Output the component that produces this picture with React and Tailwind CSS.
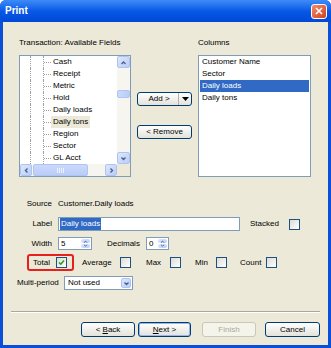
import React from "react";

const fields = ["Cash", "Receipt", "Metric", "Hold", "Daily loads", "Daily tons", "Region", "Sector", "GL Acct"];
const columns = ["Customer Name", "Sector", "Daily loads", "Daily tons"];

function Chevron({ dir = "down", size = 7 }) {
  const pts = {
    up: "1.5,5 3.5,3 5.5,5",
    down: "1.5,2.5 3.5,4.5 5.5,2.5",
    left: "4.5,1.5 2.5,3.5 4.5,5.5",
    right: "2.5,1.5 4.5,3.5 2.5,5.5",
  }[dir];
  return (
    <svg width={size} height={size} viewBox="0 0 7 7" className="shrink-0">
      <polyline points={pts} fill="none" stroke="#4d6185" strokeWidth="1.4" />
    </svg>
  );
}

function ScrollBtn({ dir, className = "", size = 7 }) {
  return (
    <div className={`flex items-center justify-center overflow-hidden rounded-[2px] border border-[#b0c4f2] bg-gradient-to-br from-[#dde7fd] to-[#b9cdf8] ${className}`}>
      <Chevron dir={dir} size={size} />
    </div>
  );
}

function Check({ checked }) {
  return (
    <div className="flex h-[11px] w-[11px] shrink-0 items-center justify-center border border-[#1c5180] bg-gradient-to-br from-[#dcdbd5] to-white">
      {checked && (
        <svg width="7" height="7" viewBox="0 0 7 7">
          <polyline points="1,3.5 2.8,5.2 6,1.5" fill="none" stroke="#21a121" strokeWidth="1.6" />
        </svg>
      )}
    </div>
  );
}

function Spinner({ value, w }) {
  return (
    <div className={`flex h-[13px] ${w} items-center border border-[#7f9db9] bg-white`}>
      <span className="flex-1 pl-[2px]">{value}</span>
      <div className="flex h-full w-[11px] flex-col p-px">
        <ScrollBtn dir="up" size={5} className="h-[5px] border-0" />
        <div className="h-px" />
        <ScrollBtn dir="down" size={5} className="h-[5px] border-0" />
      </div>
    </div>
  );
}

function Button({ children, w, ml = "", variant }) {
  const base = "flex h-[15px] items-center justify-center rounded-[3px] border";
  if (variant === "disabled")
    return <div className={`${base} ${w} ${ml} border-[#c9c7ba] bg-[#f5f4ea] text-[#aca899]`}>{children}</div>;
  if (variant === "default")
    return (
      <div className={`${base} ${w} ${ml} border-[#003c74] bg-gradient-to-b from-white to-[#e3e2da] ring-1 ring-inset ring-[#99b5ea]`}>
        {children}
      </div>
    );
  return <div className={`${base} ${w} ${ml} border-[#003c74] bg-gradient-to-b from-white to-[#e3e2da]`}>{children}</div>;
}

export default function App() {
  return (
    <div className="flex h-[348px] w-[331px] flex-col overflow-hidden rounded-t-[6px] bg-[#0a4fd8] font-['Liberation_Sans',Arial,sans-serif] text-[8px] leading-[12px] text-black">
      {/* Title bar */}
      <div className="flex h-[22px] shrink-0 items-center justify-between bg-gradient-to-b from-[#3d8bf7] via-[#0859e6] to-[#0048d6] pl-[5px] pr-[4px]">
        <span className="text-[10px] font-bold text-white">Print</span>
        <div className="flex h-[15px] w-[16px] items-center justify-center rounded-[3px] border border-white bg-gradient-to-br from-[#f08a6a] to-[#d2401a]">
          <svg width="8" height="8" viewBox="0 0 8 8">
            <path d="M1 1L7 7M7 1L1 7" stroke="white" strokeWidth="1.6" />
          </svg>
        </div>
      </div>

      {/* Body */}
      <div className="mx-[3px] mb-[3px] flex flex-1 flex-col bg-[#ece9d8]">
        <div className="mt-[14px] flex h-[13px] items-center">
          <span className="ml-[16px] w-[179px]">Transaction: Available Fields</span>
          <span>Columns</span>
        </div>

        <div className="mt-[6px] flex h-[122px]">
          {/* Tree */}
          <div className="ml-[16px] flex w-[112px] flex-col border border-[#7f9db9] bg-white">
            <div className="flex h-[108px]">
              <div className="flex flex-1 flex-col">
                {fields.map((f) => (
                  <div key={f} className="flex h-[12px] items-stretch">
                    <div className="w-[10px]" />
                    <div className="w-[13px] border-l border-dotted border-[#a0a0a0]" />
                    <div className="flex w-[8px] items-center border-l border-dotted border-[#a0a0a0]">
                      <div className="w-full border-t border-dotted border-[#a0a0a0]" />
                    </div>
                    <span className={`px-[2px] leading-[12px] ${f === "Daily tons" ? "bg-[#ece9d8]" : ""}`}>{f}</span>
                  </div>
                ))}
              </div>
              <div className="flex w-[13px] flex-col bg-[#f6f5ef]">
                <ScrollBtn dir="up" className="h-[12px]" />
                <div className="flex flex-1 flex-col">
                  <div className="h-[22px]" />
                  <div className="h-[8px] rounded-[2px] border border-[#b0c4f2] bg-gradient-to-r from-[#cbd9fc] to-[#b9cdf8]" />
                </div>
                <ScrollBtn dir="down" className="h-[12px]" />
              </div>
            </div>
            <div className="flex h-[12px]">
              <div className="flex w-[97px] bg-[#f6f5ef]">
                <ScrollBtn dir="left" className="w-[12px]" />
                <div className="ml-px flex w-[55px] items-center justify-center rounded-[2px] border border-[#b0c4f2] bg-gradient-to-b from-[#cbd9fc] to-[#b9cdf8]">
                  <div className="flex gap-px">
                    <div className="h-[5px] w-px bg-[#eef3fe]" />
                    <div className="h-[5px] w-px bg-[#eef3fe]" />
                    <div className="h-[5px] w-px bg-[#eef3fe]" />
                    <div className="h-[5px] w-px bg-[#eef3fe]" />
                  </div>
                </div>
                <div className="flex-1" />
                <ScrollBtn dir="right" className="w-[12px]" />
              </div>
              <div className="flex-1 bg-[#ece9d8]" />
            </div>
          </div>

          {/* Middle buttons */}
          <div className="flex w-[67px] flex-col px-[6px] pt-[37px]">
            <div className="flex h-[14px] items-stretch rounded-[3px] border border-[#003c74] bg-gradient-to-b from-white to-[#e3e2da]">
              <span className="flex flex-1 items-center justify-center pl-[2px]">Add &gt;</span>
              <div className="flex w-[13px] items-center justify-center border-l border-[#b5b2a3]">
                <svg width="7" height="4" viewBox="0 0 7 4">
                  <path d="M0 0H7L3.5 4Z" fill="black" />
                </svg>
              </div>
            </div>
            <div className="mt-[19px] flex h-[14px] items-center justify-center rounded-[3px] border border-[#003c74] bg-gradient-to-b from-white to-[#e3e2da]">
              &lt; Remove
            </div>
          </div>

          {/* Columns list */}
          <div className="flex w-[113px] flex-col border border-[#7f9db9] bg-white px-px">
            {columns.map((c) => (
              <div
                key={c}
                className={`h-[12px] pl-[2px] leading-[12px] ${c === "Daily loads" ? "bg-[#316ac5] text-white" : ""}`}
              >
                {c}
              </div>
            ))}
          </div>
        </div>

        {/* Source */}
        <div className="mt-[20px] flex h-[13px] items-center">
          <span className="w-[49px] text-right">Source</span>
          <span className="ml-[6px]">Customer.Daily loads</span>
        </div>

        {/* Label */}
        <div className="mt-[7px] flex h-[14px] items-center">
          <span className="w-[49px] text-right">Label</span>
          <div className="ml-[6px] flex h-[14px] w-[182px] items-center border border-[#7f9db9] bg-white pl-px">
            <span className="bg-[#316ac5] px-px text-white">Daily loads</span>
          </div>
          <span className="ml-[10px] w-[39px]">Stacked</span>
          <Check />
        </div>

        {/* Width / Decimals */}
        <div className="mt-[6px] flex h-[13px] items-center">
          <span className="w-[49px] text-right">Width</span>
          <div className="ml-[6px]">
            <Spinner value="5" w="w-[34px]" />
          </div>
          <span className="ml-[15px] w-[39px]">Decimals</span>
          <Spinner value="0" w="w-[23px]" />
        </div>

        {/* Aggregates */}
        <div className="mt-[4px] flex h-[17px] items-center">
          <div className="ml-[24px] flex h-[17px] w-[47px] items-center rounded-[3px] border-2 border-[#e8201c]">
            <span className="w-[21px] text-right">Total</span>
            <div className="ml-[6px]">
              <Check checked />
            </div>
          </div>
          <span className="ml-[8px] w-[38px]">Average</span>
          <Check />
          <span className="ml-[15px] w-[24px]">Max</span>
          <Check />
          <span className="ml-[14px] w-[21px]">Min</span>
          <Check />
          <span className="ml-[13px] w-[26px]">Count</span>
          <Check />
        </div>

        {/* Multi-period */}
        <div className="mt-[5px] flex h-[14px] items-center">
          <span className="ml-[14px] w-[47px]">Multi-period</span>
          <div className="flex h-[14px] w-[69px] items-center border border-[#7f9db9] bg-white">
            <span className="flex-1 pl-[3px]">Not used</span>
            <div className="h-full w-[12px] p-px">
              <ScrollBtn dir="down" className="h-full" />
            </div>
          </div>
        </div>

        {/* Separator */}
        <div className="ml-[8px] mt-[21px] w-[309px] border-t border-b border-t-[#aca899] border-b-white" />

        {/* Buttons */}
        <div className="mt-[9px] flex">
          <Button w="w-[54px]" ml="ml-[78px]">
            &lt;&nbsp;<span className="underline">B</span>ack
          </Button>
          <Button w="w-[53px]" ml="ml-[3px]" variant="default">
            <span className="underline">N</span>ext&nbsp;&gt;
          </Button>
          <Button w="w-[54px]" ml="ml-[11px]" variant="disabled">
            Finish
          </Button>
          <Button w="w-[55px]" ml="ml-[9px]">
            Cancel
          </Button>
        </div>
      </div>
    </div>
  );
}
